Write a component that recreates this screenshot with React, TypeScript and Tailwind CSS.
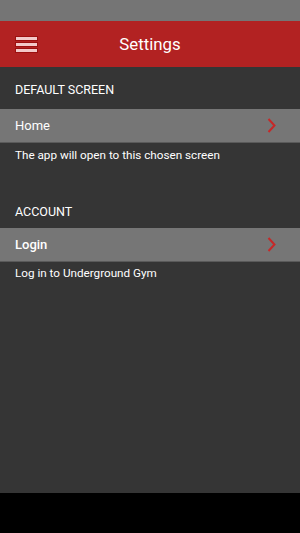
import React from 'react';

const Chevron = () => (
  <svg width="9" height="15" viewBox="0 0 9 15" className="shrink-0">
    <path d="M1.5 1 L7.5 7.5 L1.5 14" fill="none" stroke="#c62828" strokeWidth="2" />
  </svg>
);

const Hamburger = () => (
  <div className="flex flex-col gap-[3px] w-[21px]">
    <div className="h-[3px] bg-[#f3c9c9] ring-1 ring-[#9b1010]" />
    <div className="h-[3px] bg-[#f3c9c9] ring-1 ring-[#9b1010]" />
    <div className="h-[3px] bg-[#f3c9c9] ring-1 ring-[#9b1010]" />
  </div>
);

const Row = ({ item, bold }: { item: string; bold?: boolean }) => (
  <div className="h-[34px] flex items-center justify-between pl-[15px] pr-[24px] bg-[#767676] border-b border-[#5a5a5a]">
    <span className={`text-[13px] text-white ${bold ? 'font-medium' : ''}`}>{item}</span>
    <Chevron />
  </div>
);

export default function App() {
  return (
    <div className="w-[300px] h-[533px] flex flex-col bg-black" style={{ fontFamily: 'Roboto, "Noto Sans", sans-serif' }}>
      <div className="h-[21px] bg-[#757575]" />
      <div className="h-[46px] bg-[#b22222] flex items-center px-[16px] relative">
        <Hamburger />
        <div className="absolute inset-0 flex items-center justify-center pt-[2px] text-[16.8px] text-white">Settings</div>
      </div>
      <div className="h-[426px] bg-[#353535] flex flex-col">
        <div className="h-[42px] flex items-center pt-[4px] px-[15px] text-[12.5px] text-white">DEFAULT SCREEN</div>
        <Row item="Home" />
        <div className="h-[26px] flex items-center px-[15px] text-[11.7px] text-white">The app will open to this chosen screen</div>
        <div className="h-[28px]" />
        <div className="h-[31px] flex items-center px-[15px] text-[12.5px] text-white">ACCOUNT</div>
        <Row item="Login" bold />
        <div className="h-[24px] flex items-center px-[15px] text-[11.7px] text-white">Log in to Underground Gym</div>
      </div>
    </div>
  );
}
